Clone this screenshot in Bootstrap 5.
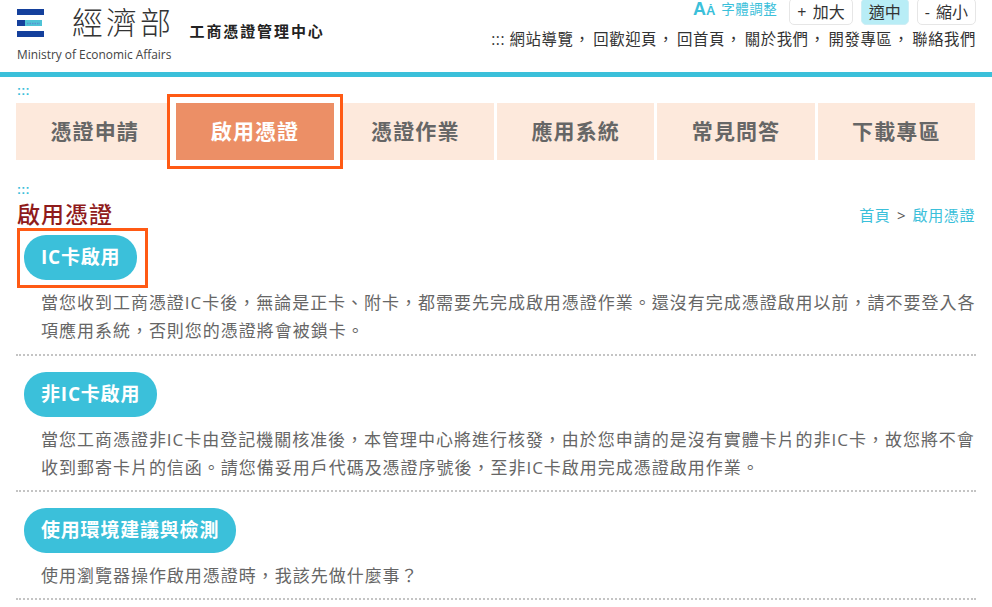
<!DOCTYPE html>
<html lang="zh-Hant"><head><meta charset="utf-8"><title>啟用憑證</title>
<link href="https://cdn.jsdelivr.net/npm/bootstrap@5.3.0/dist/css/bootstrap.min.css" rel="stylesheet">
<style>
html,body{height:607px;overflow:hidden}
body{font-family:"Open Sans","Noto Sans CJK TC",sans-serif;color:#333;background:#fff}
.site-head{height:77px;border-bottom:5px solid #3bc0da;padding:0 16px 0 17px}
.logo-mark{width:27px;height:28px;margin-top:9px;flex:none}
.logo-name{font-size:31px;line-height:32px;letter-spacing:3px;font-weight:300;color:#333;margin:6px 0 0 28px}
.logo-sub{font-size:15px;line-height:20px;font-weight:700;letter-spacing:1.9px;margin:21px 0 0 15.5px;color:#222}
.logo-en{font-family:"Open Sans",sans-serif;font-size:11.9px;line-height:14px;color:#444;margin-top:6px}
.tool-top{height:25px}
.font-label{color:#3bc0da;font-size:13.5px;line-height:18px;letter-spacing:.5px;margin-right:4px}
.font-aa{color:#3bc0da;font-family:"Liberation Sans",sans-serif;font-weight:700;font-size:18px;line-height:18px;margin-right:6px}
.font-aa small{font-size:13px;font-weight:700}
.size-btn{height:27px;margin-top:-2px;padding:0 7px;border:1px solid #e6e6e6;border-radius:5px;font-size:16px;line-height:27px;word-spacing:2px;color:#333;background:#fff;margin-left:8px;display:block}
.size-on{background:#b8edf6;border-color:#cdeef5}
.site-links{font-size:15.4px;line-height:20px;letter-spacing:.55px;color:#333;margin-top:5px;white-space:nowrap}
.site-links a{color:#333;text-decoration:none}
.site-links .sep{margin:0 3px 0 1px}
.accesskey{font-size:12px;line-height:12px;color:#3bc0da;font-family:"Liberation Sans",sans-serif;font-weight:700;letter-spacing:.3px;margin-left:17px;height:12px}
.tab-grid{display:grid;grid-template-columns:repeat(6,1fr);gap:3px;margin:6px 17px 0 16px;height:57px}
.tab-item{background:#fde9dc;color:#666;font-size:21px;font-weight:700;letter-spacing:1.1px;display:flex;align-items:center;justify-content:center;text-decoration:none;line-height:1}
.tab-on{background:#ec8f66;color:#fff;position:relative;z-index:1;box-shadow:0 0 0 6px #fff,0 0 0 9px #ff5a14}
.crumb-row{margin:0 17px 0 16px;height:30px}
.pg-title{font-size:23px;line-height:30px;color:#8f1b1b;font-weight:500;letter-spacing:1px;margin:3px 0 0 1px}
.crumb{font-size:15px;line-height:20px;color:#3bc0da;letter-spacing:.6px;margin-top:9px}
.crumb a{color:#3bc0da;text-decoration:none}
.crumb i{font-style:normal;color:#555;margin:0 2px}
.info-block{margin:0 16px;border-bottom:2px dotted #c4c4c4;padding-bottom:8px}
.pill-wrap{display:flex;padding:0 0 0 8px}
.pill{display:block;background:#3bc0da;color:#fff;font-size:19px;font-weight:700;height:45px;line-height:45px;border-radius:22px;padding:0 17px;letter-spacing:.8px}
.mark-box{position:relative;padding-bottom:9px}
.mark-box::after{content:"";position:absolute;left:1px;top:-7px;width:131px;height:60px;border:3px solid #ff5a14;pointer-events:none}
.info-text{font-size:17px;line-height:28px;letter-spacing:.98px;color:#666;margin:9px 0 0 25px}
</style></head><body>
<header class="site-head d-flex justify-content-between">
 <div>
  <div class="d-flex">
   <svg class="logo-mark" viewBox="0 0 27 28"><rect width="27" height="6" fill="#14409c"/><rect y="11" width="8" height="6" fill="#14409c"/><rect x="8" y="11" width="17" height="6" fill="#4fc3d6"/><path d="M10 14.5h13" stroke="#5a8fd0" stroke-width="1.5" stroke-dasharray="1.5 1"/><rect y="22" width="27" height="6" fill="#14409c"/></svg>
   <div class="logo-name">經濟部</div>
   <div class="logo-sub">工商憑證管理中心</div>
  </div>
  <div class="logo-en">Ministry of Economic Affairs</div>
 </div>
 <div class="text-end">
  <div class="tool-top d-flex justify-content-end align-items-start">
   <span class="font-aa">A<small>Ȧ</small></span><span class="font-label">字體調整</span>
   <a class="size-btn text-decoration-none" href="#">+ 加大</a><a class="size-btn size-on text-decoration-none" href="#">適中</a><a class="size-btn text-decoration-none" href="#">- 縮小</a>
  </div>
  <div class="site-links">::: <a href="#">網站導覽</a><span class="sep">，</span><a href="#">回歡迎頁</a><span class="sep">，</span><a href="#">回首頁</a><span class="sep">，</span><a href="#">關於我們</a><span class="sep">，</span><a href="#">開發專區</a><span class="sep">，</span><a href="#">聯絡我們</a></div>
 </div>
</header>
<div class="accesskey mt-2">:::</div>
<nav class="tab-grid">
 <a class="tab-item" href="#">憑證申請</a><a class="tab-item tab-on" href="#">啟用憑證</a><a class="tab-item" href="#">憑證作業</a><a class="tab-item" href="#">應用系統</a><a class="tab-item" href="#">常見問答</a><a class="tab-item" href="#">下載專區</a>
</nav>
<div class="accesskey" style="margin-top:24px">:::</div>
<div class="crumb-row d-flex justify-content-between">
 <h1 class="pg-title">啟用憑證</h1>
 <div class="crumb"><a href="#">首頁</a> <i>&gt;</i> <a href="#">啟用憑證</a></div>
</div>
<section class="info-block mark-box" style="margin-top:9px">
 <div class="pill-wrap"><span class="pill">IC卡啟用</span></div>
 <p class="info-text">當您收到工商憑證IC卡後，無論是正卡、附卡，都需要先完成啟用憑證作業。還沒有完成憑證啟用以前，請不要登入各項應用系統，否則您的憑證將會被鎖卡。</p>
</section>
<section class="info-block" style="margin-top:16px">
 <div class="pill-wrap"><span class="pill">非IC卡啟用</span></div>
 <p class="info-text">當您工商憑證非IC卡由登記機關核准後，本管理中心將進行核發，由於您申請的是沒有實體卡片的非IC卡，故您將不會收到郵寄卡片的信函。請您備妥用戶代碼及憑證序號後，至非IC卡啟用完成憑證啟用作業。</p>
</section>
<section class="info-block" style="margin-top:16px">
 <div class="pill-wrap"><span class="pill">使用環境建議與檢測</span></div>
 <p class="info-text">使用瀏覽器操作啟用憑證時，我該先做什麼事？</p>
</section>
</body></html>
